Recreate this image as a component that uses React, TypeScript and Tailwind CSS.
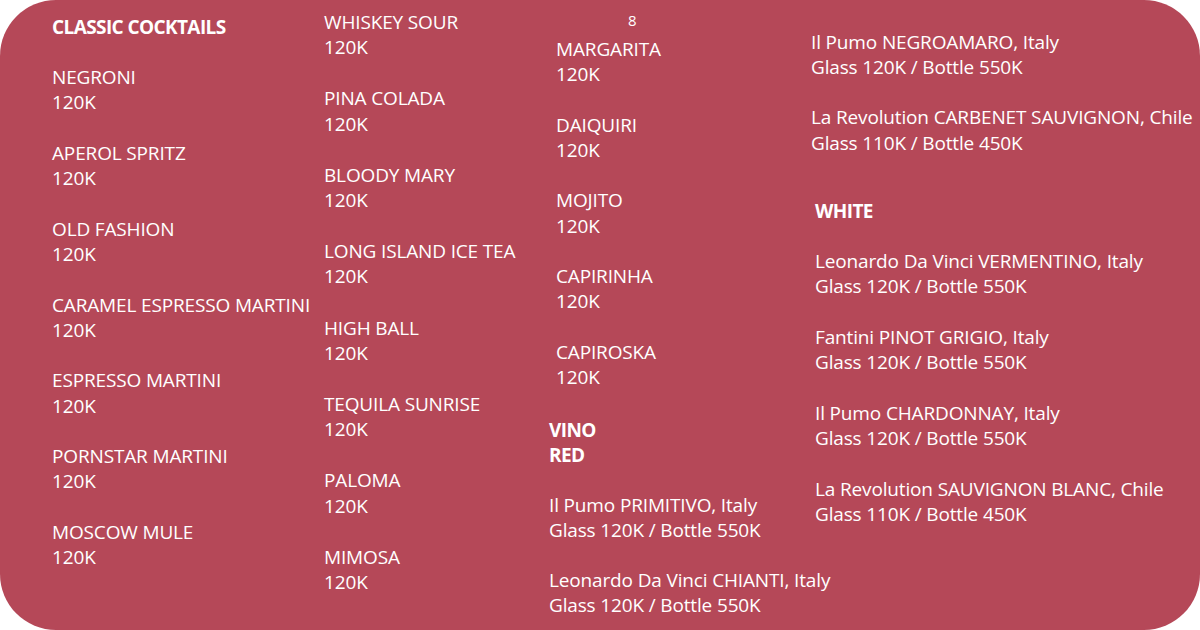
const font = { fontFamily: '"Open Sans", "Liberation Sans", sans-serif' };

type Item = { name: string; price: string };

const classics: Item[] = [
  { name: "NEGRONI", price: "120K" },
  { name: "APEROL SPRITZ", price: "120K" },
  { name: "OLD FASHION", price: "120K" },
  { name: "CARAMEL ESPRESSO MARTINI", price: "120K" },
  { name: "ESPRESSO MARTINI", price: "120K" },
  { name: "PORNSTAR MARTINI", price: "120K" },
  { name: "MOSCOW MULE", price: "120K" },
];

const second: Item[] = [
  { name: "WHISKEY SOUR", price: "120K" },
  { name: "PINA COLADA", price: "120K" },
  { name: "BLOODY MARY", price: "120K" },
  { name: "LONG ISLAND ICE TEA", price: "120K" },
  { name: "HIGH BALL", price: "120K" },
  { name: "TEQUILA SUNRISE", price: "120K" },
  { name: "PALOMA", price: "120K" },
  { name: "MIMOSA", price: "120K" },
];

const third: Item[] = [
  { name: "MARGARITA", price: "120K" },
  { name: "DAIQUIRI", price: "120K" },
  { name: "MOJITO", price: "120K" },
  { name: "CAPIRINHA", price: "120K" },
  { name: "CAPIROSKA", price: "120K" },
];

const redWines: Item[] = [
  { name: "Il Pumo PRIMITIVO, Italy", price: "Glass 120K / Bottle 550K" },
  { name: "Leonardo Da Vinci CHIANTI, Italy", price: "Glass 120K / Bottle 550K" },
];

const redWines2: Item[] = [
  { name: "Il Pumo NEGROAMARO, Italy", price: "Glass 120K / Bottle 550K" },
  { name: "La Revolution CARBENET SAUVIGNON, Chile", price: "Glass 110K / Bottle 450K" },
];

const whiteWines: Item[] = [
  { name: "Leonardo Da Vinci VERMENTINO, Italy", price: "Glass 120K / Bottle 550K" },
  { name: "Fantini PINOT GRIGIO, Italy", price: "Glass 120K / Bottle 550K" },
  { name: "Il Pumo CHARDONNAY, Italy", price: "Glass 120K / Bottle 550K" },
  { name: "La Revolution SAUVIGNON BLANC, Chile", price: "Glass 110K / Bottle 450K" },
];

const List = ({ items, gap }: { items: Item[]; gap: string }) => (
  <div className={`flex flex-col ${gap}`}>
    {items.map((it) => (
      <div key={it.name} className="whitespace-nowrap">
        <p>{it.name}</p>
        <p>{it.price}</p>
      </div>
    ))}
  </div>
);

export default function App() {
  return (
    <div className="w-[1200px] h-[630px] bg-white" style={font}>
      <div className="flex h-full rounded-[56px] bg-[#b54858] pl-[52px] text-[19px] leading-[25.2px] tracking-[-0.15px] text-white">
        <div className="w-[272px] pt-[15px]">
          <h2 className="font-bold tracking-[-0.6px]">CLASSIC COCKTAILS</h2>
          <div className="mt-[25px]">
            <List items={classics} gap="gap-[25.4px]" />
          </div>
        </div>

        <div className="w-[232px] pt-[10px]">
          <List items={second} gap="gap-[26px]" />
        </div>

        <div className="w-[255px] pt-[8px]">
          <p className="pl-[72px] text-[15px] leading-[24px]">8</p>
          <div className="mt-[5px]">
            <List items={third} gap="gap-[25.3px]" />
          </div>
          <div className="-ml-[7px] mt-[28px]">
            <h3 className="font-bold tracking-[-0.6px]">VINO</h3>
            <h3 className="font-bold tracking-[-0.6px]">RED</h3>
            <div className="mt-[24px]">
              <List items={redWines} gap="gap-[25px]" />
            </div>
          </div>
        </div>

        <div className="flex-1 pt-[30px]">
          <List items={redWines2} gap="gap-[25px]" />
          <div className="ml-[4px] mt-[43px]">
            <h3 className="font-bold tracking-[-0.6px]">WHITE</h3>
            <div className="mt-[25px]">
              <List items={whiteWines} gap="gap-[25.5px]" />
            </div>
          </div>
        </div>
      </div>
    </div>
  );
}
